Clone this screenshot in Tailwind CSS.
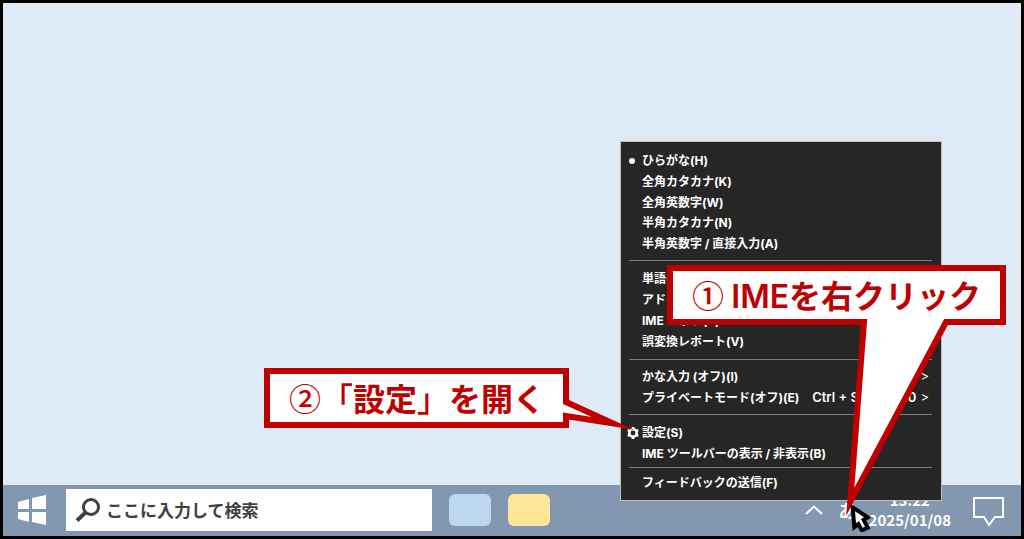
<!DOCTYPE html>
<html lang="ja">
<head>
<meta charset="utf-8">
<meta name="viewport" content="width=device-width, initial-scale=1">
<title>IME の設定を開く</title>
<script src="https://cdn.jsdelivr.net/npm/@tailwindcss/browser@4"></script>
</head>
<body class="font-['Noto_Sans_CJK_JP',sans-serif]">
<div class="relative flex min-h-screen flex-col overflow-hidden border-3 border-black bg-[#deeaf6]">
  <main class="flex-1"></main>

  <footer class="flex h-[51px] items-center bg-[#8497b0] pb-px">
    <button aria-label="スタート" class="ml-[15px]">
      <svg class="h-[30px] w-7" viewBox="0 0 28 30" fill="#fff"><path d="M0 7 11 4V14H0zM14 3 28 0V14H14zM0 17H11V27L0 24zM14 17H28V30L14 27z"/></svg>
    </button>
    <label class="ml-5 flex h-[42px] w-[366px] items-center bg-white pl-2.5">
      <svg class="h-6 w-6 shrink-0" viewBox="0 0 24 24" fill="none" stroke="#404040"><circle cx="15" cy="9" r="7.5" stroke-width="3"/><path d="M10 14 1 22.500" stroke-width="4"/></svg>
      <input type="text" aria-label="検索" placeholder="ここに入力して検索" class="ml-1.5 min-w-0 flex-1 text-[17px] font-bold text-[#404040] outline-none placeholder:text-[#404040]">
    </label>
    <button aria-label="アプリ 1" class="ml-[17px] h-8 w-[42px] rounded-md bg-[#bdd7ee]"></button>
    <button aria-label="アプリ 2" class="ml-[17px] h-8 w-[42px] rounded-md bg-[#ffe699]"></button>
    <div class="ml-auto flex items-center pr-4 text-white">
      <button aria-label="隠れているインジケーター"><svg class="h-2.5 w-[18px]" viewBox="0 0 18 10" fill="none" stroke="#fff" stroke-width="2"><path d="M1 9 9 1.500 17 9"/></svg></button>
      <button class="ml-4 text-lg leading-6 font-bold">あ</button>
      <div class="ml-3 text-center text-[15px] leading-5 font-bold"><div>13:22</div><div>2025/01/08</div></div>
      <button aria-label="通知" class="ml-[22px] pt-1"><svg class="h-[30px] w-8" viewBox="0 0 32 30" fill="none" stroke="#fff" stroke-width="2"><path d="M1 1H30V20H22L16 28 11 20H1z"/></svg></button>
    </div>
  </footer>

  <div role="menu" class="absolute right-[79px] bottom-[35px] flex w-[322px] flex-col border border-[#bfbfbf] bg-[#262626] pt-2 pr-[9px] pb-[7px] pl-2 font-['Inter','Noto_Sans_CJK_JP',sans-serif] text-xs font-bold text-white">
    <button role="menuitem" class="flex h-[21px] items-center"><span class="flex w-[13px]"><span class="h-1.5 w-1.5 rounded-full bg-white"></span></span>ひらがな(H)</button>
    <button role="menuitem" class="flex h-[21px] items-center pl-[13px]">全角カタカナ(K)</button>
    <button role="menuitem" class="flex h-[21px] items-center pl-[13px]">全角英数字(W)</button>
    <button role="menuitem" class="flex h-5 items-center pl-[13px]">半角カタカナ(N)</button>
    <button role="menuitem" class="flex h-[21px] items-center pl-[13px]">半角英数字 / 直接入力(A)</button>
    <hr class="mt-[6px] mb-[7px] border-[#7f7f7f]">
    <button role="menuitem" class="flex h-[21px] items-center pl-[13px]">単語の追加(O)</button>
    <button role="menuitem" class="flex h-[21px] items-center pl-[13px]">アドイン辞書(D)</button>
    <button role="menuitem" class="flex h-[21px] items-center pl-[13px]">IME パッド(P)</button>
    <button role="menuitem" class="flex h-[21px] items-center pl-[13px]">誤変換レポート(V)</button>
    <hr class="mt-[7px] mb-[6px] border-[#7f7f7f]">
    <button role="menuitem" class="flex h-[21px] items-center pr-[3px] pl-[13px]">かな入力 (オフ)(I)<span class="ml-auto text-[13px] font-normal">&gt;</span></button>
    <button role="menuitem" class="flex h-[21px] items-center pr-[3px] pl-[13px] whitespace-nowrap">プライベートモード(オフ)(E)<span class="ml-auto text-[13px] font-semibold">Ctrl + Shift + F10</span><span class="ml-1 text-[13px] font-normal">&gt;</span></button>
    <hr class="mt-[6px] mb-[7px] border-[#7f7f7f]">
    <button role="menuitem" class="flex h-[21px] items-center"><svg class="-ml-0.5 mr-[3px] h-3 w-3" viewBox="0 0 12 12" fill="none" stroke="#fff"><circle cx="6" cy="6" r="3.700" stroke-width="2.500"/><path d="M6 0V2M6 10V12M.8 3 2.500 4M9.500 8 11.200 9M.8 9 2.500 8M9.500 4 11.200 3" stroke-width="2.500"/></svg>設定(S)</button>
    <button role="menuitem" class="flex h-[21px] items-center pl-[13px]">IME ツールバーの表示 / 非表示(B)</button>
    <hr class="mt-[3px] mb-1 border-[#7f7f7f]">
    <button role="menuitem" class="flex h-[21px] items-center pl-[13px]">フィードバックの送信(F)</button>
  </div>

  <!-- Callout 1 -->
  <div class="absolute right-[15px] bottom-[18px] h-[253px] w-[339px]">
    <svg class="absolute inset-0 h-full w-full" viewBox="0 0 339 253"><path d="M3 3H336V57H279L183.300 236.600 197 57H3z" fill="#fff" stroke="#c00000" stroke-width="6" stroke-miterlimit="10"/></svg>
    <p class="relative pl-[25px] text-[32px] leading-[58px] font-bold whitespace-nowrap text-[#c00000]"><span class="font-medium">①</span> <span class="font-['Inter',sans-serif] font-semibold">IME</span>を右クリック</p>
  </div>

  <!-- Callout 2 -->
  <div class="absolute right-[385px] bottom-[103px] h-[65px] w-[372px]">
    <svg class="absolute inset-0 h-full w-full" viewBox="0 0 372 65"><path d="M3 3H302V34L349 55.300 302 48V57H3z" fill="#fff" stroke="#c00000" stroke-width="6" stroke-miterlimit="10"/></svg>
    <p class="relative pl-[25px] text-[32px] leading-[58px] font-bold whitespace-nowrap text-[#c00000]"><span class="font-medium">②「</span>設定<span class="font-medium">」</span>を開く</p>
  </div>

  <!-- Mouse pointer -->
  <svg class="absolute right-[149px] bottom-[4px] h-[30px] w-6" viewBox="0 0 24 30"><path d="M7 9.300 16 15.300 13 17 17 24.700 14.700 25.700 11 19 8 21.300z" fill="#fff" stroke="#000" stroke-width="8" paint-order="stroke"/></svg>
</div>
</body>
</html>
